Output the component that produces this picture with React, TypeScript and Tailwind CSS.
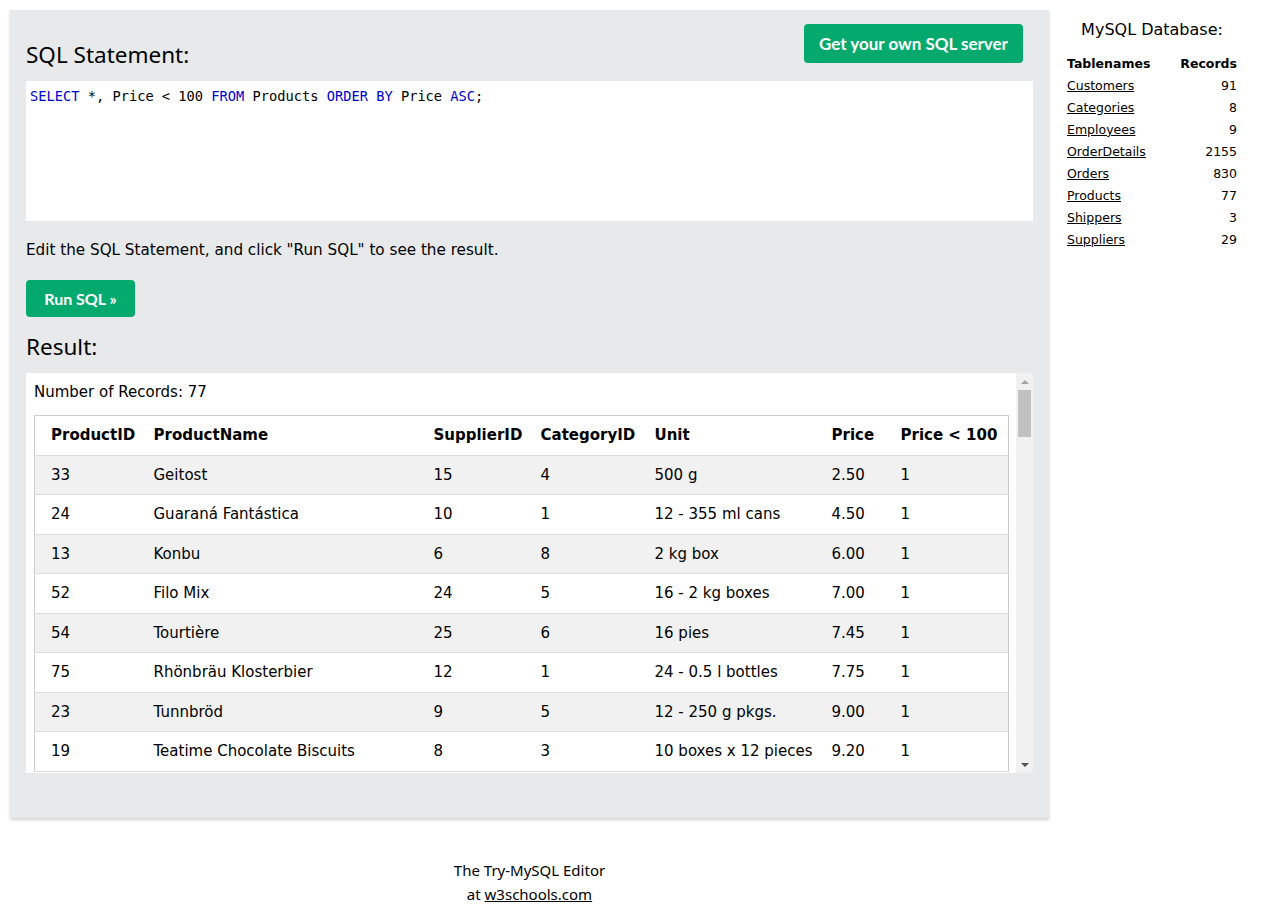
import React from 'react';

type Row = [string, string, string, string, string, string, string];

const rows: Row[] = [
  ['33', 'Geitost', '15', '4', '500 g', '2.50', '1'],
  ['24', 'Guaraná Fantástica', '10', '1', '12 - 355 ml cans', '4.50', '1'],
  ['13', 'Konbu', '6', '8', '2 kg box', '6.00', '1'],
  ['52', 'Filo Mix', '24', '5', '16 - 2 kg boxes', '7.00', '1'],
  ['54', 'Tourtière', '25', '6', '16 pies', '7.45', '1'],
  ['75', 'Rhönbräu Klosterbier', '12', '1', '24 - 0.5 l bottles', '7.75', '1'],
  ['23', 'Tunnbröd', '9', '5', '12 - 250 g pkgs.', '9.00', '1'],
  ['19', 'Teatime Chocolate Biscuits', '8', '3', '10 boxes x 12 pieces', '9.20', '1'],
];

const dbTables: [string, string][] = [
  ['Customers', '91'],
  ['Categories', '8'],
  ['Employees', '9'],
  ['OrderDetails', '2155'],
  ['Orders', '830'],
  ['Products', '77'],
  ['Shippers', '3'],
  ['Suppliers', '29'],
];

const headers = ['ProductID', 'ProductName', 'SupplierID', 'CategoryID', 'Unit', 'Price', 'Price < 100'];
const colWidths = ['w-[111px]', 'w-[280px]', 'w-[107px]', 'w-[114px]', 'w-[177px]', 'w-[69px]', 'w-[116px]'];

const verdana = 'font-["DejaVu_Sans",Verdana,sans-serif]';
const segoe = 'font-["Noto_Sans","Open_Sans",sans-serif]';
const btnFont = 'font-["Lato","Open_Sans",sans-serif]';

function ScrollBar() {
  return (
    <div className="flex w-[17px] shrink-0 flex-col items-center bg-[#f1f1f1]">
      <div className="flex h-[17px] w-full items-center justify-center">
        <div className="h-0 w-0 border-x-[4px] border-b-[4px] border-x-transparent border-b-[#a3a3a3]" />
      </div>
      <div className="h-[47px] w-[13px] bg-[#c1c1c1]" />
      <div className="flex-1" />
      <div className="flex h-[17px] w-full items-center justify-center">
        <div className="h-0 w-0 border-x-[4px] border-t-[4px] border-x-transparent border-t-[#505050]" />
      </div>
    </div>
  );
}

export default function App() {
  return (
    <div className={`min-h-screen bg-white text-black ${verdana}`}>
      <div className="flex">
        {/* editor column */}
        <div className="mt-[10px] ml-[10px] w-[1039px] shrink-0">
          <div className="bg-[#e7e9eb] px-4 pt-[14px] pb-[45px] shadow-[0_2px_3px_rgba(0,0,0,0.18)]">
            <div className="flex items-start justify-between">
              <h2 className={`mt-[16px] text-[22.5px] leading-[30px] ${segoe}`}>SQL Statement:</h2>
              <button
                className={`mr-[10px] h-[39px] w-[219px] rounded-[4px] bg-[#04aa6d] text-[17px] font-bold text-white ${btnFont}`}
              >
                Get your own SQL server
              </button>
            </div>
            <div className="mt-[11px] h-[140px] bg-white px-[4px] pt-[6px] font-['DejaVu_Sans_Mono',monospace] text-[13.7px] leading-[19px] whitespace-pre">
              <span className="text-[#0000cd]">SELECT</span> *, Price {'<'} 100{' '}
              <span className="text-[#0000cd]">FROM</span> Products{' '}
              <span className="text-[#0000cd]">ORDER BY</span> Price{' '}
              <span className="text-[#0000cd]">ASC</span>;
            </div>
            <p className="mt-[18px] text-[15.2px] leading-[22px]">
              Edit the SQL Statement, and click "Run SQL" to see the result.
            </p>
            <button
              className={`mt-[19px] h-[37px] w-[109px] rounded-[4px] bg-[#04aa6d] text-[16px] font-bold text-white ${btnFont}`}
            >
              Run SQL »
            </button>
            <h2 className={`mt-[15px] text-[22.5px] leading-[30px] ${segoe}`}>Result:</h2>
            <div className="mt-[11px] flex h-[400px] bg-white">
              <div className="flex-1 overflow-hidden px-2 pt-2">
                <div className="text-[15px] leading-[22px]">Number of Records: 77</div>
                <table className="mt-[12px] w-full table-fixed border-collapse border border-[#cccccc] text-[15px]">
                  <colgroup>
                    {colWidths.map((w, i) => (
                      <col key={i} className={w} />
                    ))}
                  </colgroup>
                  <thead>
                    <tr className="border-b border-[#dddddd]">
                      {headers.map((h, i) => (
                        <th
                          key={h}
                          className={`py-2 pr-2 text-left leading-[22.5px] font-bold whitespace-nowrap ${
                            i === 0 ? 'pl-4' : 'pl-2'
                          }`}
                        >
                          {h}
                        </th>
                      ))}
                    </tr>
                  </thead>
                  <tbody>
                    {rows.map((r, ri) => (
                      <tr
                        key={r[0]}
                        className={`border-b border-[#dddddd] ${ri % 2 === 0 ? 'bg-[#f1f1f1]' : 'bg-white'}`}
                      >
                        {r.map((c, i) => (
                          <td
                            key={i}
                            className={`py-2 pr-2 leading-[22.5px] whitespace-nowrap ${i === 0 ? 'pl-4' : 'pl-2'}`}
                          >
                            {c}
                          </td>
                        ))}
                      </tr>
                    ))}
                  </tbody>
                </table>
              </div>
              <ScrollBar />
            </div>
          </div>
          <div className={`mt-[40px] text-center text-[15px] leading-[24px] ${segoe}`}>
            <div>The Try-MySQL Editor</div>
            <div>
              at <a className="underline">w3schools.com</a>
            </div>
          </div>
        </div>

        {/* database sidebar */}
        <div className="ml-[18px] w-[170px] shrink-0 pt-[18px]">
          <div className="text-center text-[16px] leading-[24px]">MySQL Database:</div>
          <table className="mt-[11px] w-full border-collapse text-[12.5px]">
            <thead>
              <tr>
                <th className="h-[22px] text-left font-bold">Tablenames</th>
                <th className="h-[22px] text-right font-bold">Records</th>
              </tr>
            </thead>
            <tbody>
              {dbTables.map(([n, c]) => (
                <tr key={n}>
                  <td className="h-[22px]">
                    <a className="underline">{n}</a>
                  </td>
                  <td className="h-[22px] text-right">{c}</td>
                </tr>
              ))}
            </tbody>
          </table>
        </div>
      </div>
    </div>
  );
}
